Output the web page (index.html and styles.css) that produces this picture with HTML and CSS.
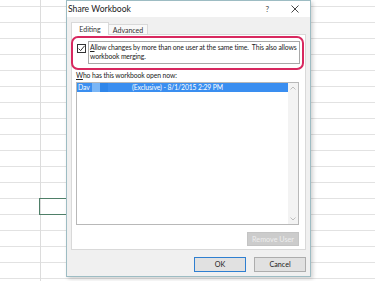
FILE: index.html
```html
<!DOCTYPE html>
<html>
<head>
<meta charset="utf-8">
<link rel="stylesheet" href="styles.css">
</head>
<body>
<div class="sheet">
  <div class="cell-select"></div>
  <div class="dialog">
    <div class="titlebar">
      <span class="title">Share Workbook</span>
      <span class="help">?</span>
      <svg class="close" width="8" height="8" viewBox="0 0 8 8"><path d="M0.5 0.5 L7.5 7.5 M7.5 0.5 L0.5 7.5" stroke="#333" stroke-width="0.9" fill="none"/></svg>
    </div>
    <div class="body">
      <div class="tabs">
        <div class="tab tab-active">Editing</div>
        <div class="tab">Advanced</div>
      </div>
      <div class="panel">
        <div class="option">
          <span class="check"><svg width="9" height="9" viewBox="0 0 9 9"><path d="M1.6 4.6 L3.6 6.6 L7.6 1.8" stroke="#222" stroke-width="0.9" fill="none"/></svg></span>
          <div class="focus">Allow changes by more than one user at the same time.&nbsp; This also allows<br>workbook merging.</div>
        </div>
        <div class="label">Who has this workbook open now:</div>
        <div class="list">
          <div class="rows">
            <div class="row-sel">
              <span class="name">Dav</span><span class="blur1"></span><span class="blur2"></span><span class="info">(Exclusive) - 8/1/2015 2:29 PM</span>
            </div>
          </div>
          <div class="scroll">
            <svg width="6" height="4" viewBox="0 0 6 4"><path d="M0.5 3.5 L3 1 L5.5 3.5" stroke="#b0b0b0" stroke-width="0.8" fill="none"/></svg>
            <svg width="6" height="4" viewBox="0 0 6 4"><path d="M0.5 0.5 L3 3 L5.5 0.5" stroke="#b0b0b0" stroke-width="0.8" fill="none"/></svg>
          </div>
        </div>
        <div class="remove-row"><span class="btn btn-disabled">Remove User</span></div>
      </div>
      <div class="footer">
        <span class="btn btn-default">OK</span>
        <span class="btn">Cancel</span>
      </div>
    </div>
  </div>
</div>
</body>
</html>
```
FILE: styles.css
```css
html, body {
  margin: 0;
  padding: 0;
}
body {
  width: 375px;
  height: 281px;
  overflow: hidden;
  font-family: Lato, "Noto Sans", sans-serif;
  color: #1e1e1e;
}
.sheet {
  position: relative;
  width: 375px;
  height: 281px;
  background-color: #fff;
  background-image:
    linear-gradient(to right, transparent 40px, #dcdcdc 40px, #dcdcdc 41px, transparent 41px),
    repeating-linear-gradient(to bottom, transparent 0, transparent 6px, #e2e2e2 6px, #e2e2e2 7px, transparent 7px, transparent 16px);
}
.cell-select {
  position: absolute;
  left: 39px;
  top: 198px;
  width: 40px;
  height: 15px;
  border: 1.5px solid #4f7f68;
}
.dialog {
  position: absolute;
  left: 66px;
  top: 0;
  width: 245px;
  height: 277px;
  box-sizing: border-box;
  border: 1px solid #9dbcc3;
  background: #fff;
  box-shadow: 2px 2px 4px rgba(0,0,0,0.18);
  display: flex;
  flex-direction: column;
}
.titlebar {
  height: 16px;
  display: flex;
  align-items: center;
  padding-left: 1px;
  background: #fff;
  font-size: 8.6px;
  color: #222;
}
.title {
  flex: 1;
}
.help {
  font-size: 8px;
  color: #444;
  margin-right: 22px;
}
.close {
  margin-right: 11px;
}
.body {
  flex: 1;
  background: #f0f0f0;
  display: flex;
  flex-direction: column;
  padding: 5px 4px 0 4px;
}
.tabs {
  display: flex;
  align-items: flex-end;
  height: 12px;
  font-size: 7px;
}
.tab {
  height: 10px;
  width: 40px;
  box-sizing: border-box;
  border: 1px solid #d9d9d9;
  border-bottom: none;
  background: #f8f8f8;
  display: flex;
  align-items: center;
  justify-content: center;
  color: #333;
  margin-left: -1px;
}
.tab-active {
  height: 13px;
  width: 38px;
  margin-left: 0;
  background: #fff;
  margin-bottom: -1px;
  position: relative;
  z-index: 1;
}
.panel {
  height: 216px;
  box-sizing: border-box;
  background: #fff;
  border: 1px solid #d9d9d9;
  padding: 6px 5px 0 4px;
  display: flex;
  flex-direction: column;
  font-size: 6.8px;
  letter-spacing: -0.1px;
}
.option {
  position: relative;
  display: flex;
  align-items: flex-start;
}
.option::before {
  content: "";
  position: absolute;
  left: -5px;
  right: -4px;
  top: -5px;
  bottom: -6px;
  border: 2px solid #d8285f;
  border-radius: 7px;
}
.check {
  width: 9px;
  height: 9px;
  box-sizing: border-box;
  border: 1px solid #333;
  background: #fff;
  margin-left: 1px;
  margin-top: 3px;
  display: flex;
}
.check svg {
  margin: -1px;
}
.focus {
  margin-left: 2px;
  flex: 1;
  border: 1px solid #a8a8a8;
  padding: 1px 0 2px 1px;
  line-height: 9px;
  color: #222;
  white-space: nowrap;
}
.focus::first-letter,
.label::first-letter {
  text-decoration: underline;
}
.label {
  margin-top: 7px;
  line-height: 9px;
  color: #222;
}
.list {
  margin-top: 2px;
  margin-right: 1px;
  height: 143px;
  box-sizing: border-box;
  border: 1px solid #b8b8b8;
  display: flex;
  background: #fff;
}
.rows {
  flex: 1;
}
.row-sel {
  height: 9px;
  background: #3a8ef0;
  color: #fff;
  display: flex;
  align-items: center;
  line-height: 9px;
}
.name {
  padding-left: 1px;
  width: 14px;
}
.blur1 {
  width: 8px;
  height: 9px;
  background: #7ab6f6;
}
.blur2 {
  width: 8px;
  height: 9px;
  background: #2f86ea;
}
.info {
  margin-left: 24px;
}
.scroll {
  width: 10px;
  background: #f3f3f3;
  display: flex;
  flex-direction: column;
  justify-content: space-between;
  align-items: center;
  padding: 3px 0;
}
.remove-row {
  display: flex;
  justify-content: flex-end;
  margin-top: 7px;
  margin-right: 1px;
}
.btn {
  width: 52px;
  height: 15px;
  box-sizing: border-box;
  border: 1px solid #adadad;
  background: #e1e1e1;
  display: flex;
  align-items: center;
  justify-content: center;
  font-size: 7.2px;
  letter-spacing: 0;
  color: #222;
}
.btn-disabled {
  height: 14px;
  background: #cccccc;
  border-color: #c4c4c4;
  color: #eeeeee;
}
.btn-default {
  border-color: #2f7fd0;
}
.footer {
  flex: 1;
  display: flex;
  justify-content: flex-end;
  align-items: flex-start;
  gap: 8px;
  padding-top: 7px;
}
```
